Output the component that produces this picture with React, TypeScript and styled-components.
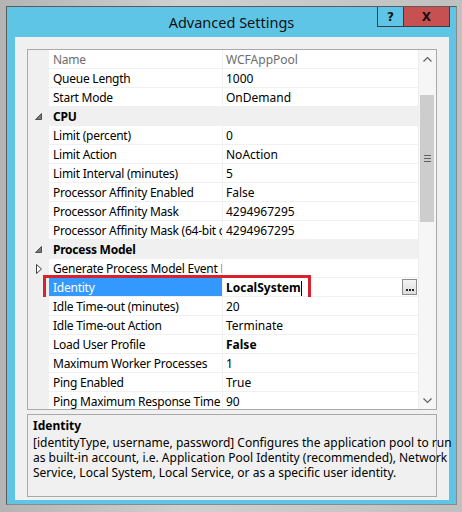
import React from 'react';
import styled, { createGlobalStyle } from 'styled-components';

const GlobalStyle = createGlobalStyle`
  html, body {
    margin: 0;
    padding: 0;
    background: #c4c4c4;
  }
  body {
    font-family: "Noto Sans", "Open Sans", sans-serif;
    font-size: 12px;
    color: #000;
  }
`;

const Screen = styled.div`
  width: 462px;
  height: 512px;
  box-sizing: border-box;
  padding: 6px 5px 7px 6px;
  display: flex;
  background: linear-gradient(90deg, #b4b4b4, #d0d0d0 40%, #c0c0c0);
`;

const Window = styled.div`
  flex: 1;
  min-width: 0;
  display: flex;
  flex-direction: column;
  background: #5fc5e7;
  border: 1px solid #5b5b5b;
  border-right-color: #8a8a8a;
  border-bottom-color: #8a8a8a;
`;

const TitleBar = styled.div`
  height: 30px;
  display: flex;
  align-items: flex-start;
`;

// left margin equals the caption buttons' width so the title stays centred
const Title = styled.div`
  flex: 1;
  margin-left: 79px;
  text-align: center;
  font-size: 14.5px;
  line-height: 30px;
  color: #111;
`;

const Controls = styled.div`
  display: flex;
  margin-right: 6px;
`;

const CaptionButton = styled.div<{ $close?: boolean; $w: number }>`
  width: ${(p) => p.$w}px;
  height: 20px;
  box-sizing: border-box;
  border: 1px solid #3c3c3c;
  border-top: none;
  border-left-width: ${(p) => (p.$close ? 0 : 1)}px;
  background: ${(p) => (p.$close ? '#c75050' : 'transparent')};
  display: flex;
  align-items: center;
  justify-content: center;
  font-family: "DejaVu Sans", sans-serif;
  font-weight: bold;
  font-size: 12px;
  color: #111;
`;

const Panel = styled.div`
  flex: 1;
  margin: 0 7px 4px 8px;
  background: #f0f0f0;
  padding: 12px 12px 3px;
  display: flex;
  flex-direction: column;
  gap: 4px;
`;

const Grid = styled.div`
  height: 361px;
  box-sizing: border-box;
  border: 1px solid #a9a9a9;
  background: #fff;
  display: flex;
`;

const Rows = styled.div`
  flex: 1;
  overflow: hidden;
`;

const Row = styled.div<{ $category?: boolean }>`
  position: relative;
  height: 19px;
  display: grid;
  grid-template-columns: 21px 174px 1fr;
  background: ${(p) => (p.$category ? '#f0f0f0' : '#fff')};
  font-weight: ${(p) => (p.$category ? 'bold' : 'normal')};
`;

const Gutter = styled.div`
  background: #f0f0f0;
  display: flex;
  align-items: center;
  justify-content: center;
`;

const NameCell = styled.div<{ $selected?: boolean; $muted?: boolean; $category?: boolean }>`
  box-sizing: border-box;
  padding: 2px 0 0 4px;
  line-height: 16px;
  white-space: nowrap;
  overflow: hidden;
  letter-spacing: -0.25px;
  border-bottom: 1px solid ${(p) => (p.$category ? 'transparent' : '#f0f0f0')};
  border-right: 1px solid ${(p) => (p.$category ? 'transparent' : '#f0f0f0')};
  background: ${(p) => (p.$selected ? '#3399ff' : 'transparent')};
  color: ${(p) => (p.$selected ? '#fff' : p.$muted ? '#6d6d6d' : 'inherit')};
`;

const ValueCell = styled.div<{ $bold?: boolean; $muted?: boolean; $category?: boolean }>`
  box-sizing: border-box;
  padding: 2px 0 0 3px;
  line-height: 16px;
  white-space: nowrap;
  overflow: hidden;
  display: flex;
  align-items: center;
  border-bottom: 1px solid ${(p) => (p.$category ? 'transparent' : '#f0f0f0')};
  font-weight: ${(p) => (p.$bold ? 'bold' : 'normal')};
  color: ${(p) => (p.$muted ? '#6d6d6d' : 'inherit')};
`;

const Caret = styled.span`
  width: 1px;
  height: 15px;
  background: #000;
`;

const EllipsisButton = styled.div`
  margin: -2px 1px 0 auto;
  width: 15px;
  height: 16px;
  box-sizing: border-box;
  border: 1px solid #8c8c8c;
  background: linear-gradient(#f4f4f4, #dddddd);
  display: flex;
  align-items: flex-end;
  justify-content: center;
  padding-bottom: 3px;
  gap: 1px;
`;

const Dot = styled.span`
  width: 2px;
  height: 2px;
  background: #222;
`;

const Highlight = styled.div`
  position: absolute;
  top: -3px;
  left: 15px;
  width: 268px;
  height: 26px;
  box-sizing: border-box;
  border: 3px solid #d9222d;
  pointer-events: none;
`;

const ScrollBar = styled.div`
  width: 17px;
  display: flex;
  flex-direction: column;
  background: #f6f6f6;
  border-left: 1px solid #ededed;
`;

const ArrowBox = styled.div`
  height: 17px;
  display: flex;
  align-items: center;
  justify-content: center;
`;

const Track = styled.div`
  flex: 1;
  padding-top: 28px;
`;

const Thumb = styled.div`
  margin: 0 2px 0 1px;
  height: 127px;
  background: #cdcdcd;
  display: flex;
  flex-direction: column;
  align-items: center;
  justify-content: center;
  gap: 2px;
`;

const GripLine = styled.span`
  width: 7px;
  height: 1px;
  background: #5f5f5f;
`;

const Description = styled.div`
  flex: 1;
  border: 1px solid #a9a9a9;
  padding: 3px 5px;
  line-height: 15px;
`;

const DescTitle = styled.div`
  font-weight: bold;
  line-height: 16px;
  margin-bottom: 1px;
`;

const DescLine = styled.div`
  white-space: nowrap;
`;

const Expanded = () => (
  <svg width="7" height="7" viewBox="0 0 7 7">
    <polygon points="6.5,0.5 6.5,6.5 0.5,6.5" fill="#7a7a7a" stroke="#505050" strokeWidth="1" />
  </svg>
);

const Collapsed = () => (
  <svg width="6" height="10" viewBox="0 0 6 10">
    <polygon points="0.5,0.5 5.5,5 0.5,9.5" fill="#fff" stroke="#404040" strokeWidth="1" />
  </svg>
);

const Chevron = ({ down }: { down?: boolean }) => (
  <svg width="9" height="6" viewBox="0 0 9 6">
    <polyline
      points={down ? '0.5,0.5 4.5,4.5 8.5,0.5' : '0.5,5.5 4.5,1.5 8.5,5.5'}
      fill="none"
      stroke="#606060"
      strokeWidth="1.2"
    />
  </svg>
);

type Item =
  | { kind: 'category'; name: string }
  | {
      kind: 'prop';
      name: string;
      value: string;
      bold?: boolean;
      muted?: boolean;
      collapsed?: boolean;
      selected?: boolean;
    };

const items: Item[] = [
  { kind: 'prop', name: 'Name', value: 'WCFAppPool', muted: true },
  { kind: 'prop', name: 'Queue Length', value: '1000' },
  { kind: 'prop', name: 'Start Mode', value: 'OnDemand' },
  { kind: 'category', name: 'CPU' },
  { kind: 'prop', name: 'Limit (percent)', value: '0' },
  { kind: 'prop', name: 'Limit Action', value: 'NoAction' },
  { kind: 'prop', name: 'Limit Interval (minutes)', value: '5' },
  { kind: 'prop', name: 'Processor Affinity Enabled', value: 'False' },
  { kind: 'prop', name: 'Processor Affinity Mask', value: '4294967295' },
  { kind: 'prop', name: 'Processor Affinity Mask (64-bit option)', value: '4294967295' },
  { kind: 'category', name: 'Process Model' },
  { kind: 'prop', name: 'Generate Process Model Event Log Entry', value: '', collapsed: true },
  { kind: 'prop', name: 'Identity', value: 'LocalSystem', bold: true, selected: true },
  { kind: 'prop', name: 'Idle Time-out (minutes)', value: '20' },
  { kind: 'prop', name: 'Idle Time-out Action', value: 'Terminate' },
  { kind: 'prop', name: 'Load User Profile', value: 'False', bold: true },
  { kind: 'prop', name: 'Maximum Worker Processes', value: '1' },
  { kind: 'prop', name: 'Ping Enabled', value: 'True' },
  { kind: 'prop', name: 'Ping Maximum Response Time (seconds)', value: '90' },
];

const PropertyRow = ({ item }: { item: Item }) => {
  if (item.kind === 'category') {
    return (
      <Row $category>
        <Gutter>
          <Expanded />
        </Gutter>
        <NameCell $category>{item.name}</NameCell>
        <ValueCell $category />
      </Row>
    );
  }
  return (
    <Row>
      <Gutter>{item.collapsed && <Collapsed />}</Gutter>
      <NameCell $selected={item.selected} $muted={item.muted}>
        {item.name}
      </NameCell>
      <ValueCell $bold={item.bold} $muted={item.muted}>
        {item.value}
        {item.selected && <Caret />}
        {item.selected && (
          <EllipsisButton>
            <Dot />
            <Dot />
            <Dot />
          </EllipsisButton>
        )}
      </ValueCell>
      {item.selected && <Highlight />}
    </Row>
  );
};

const App = () => (
  <>
    <GlobalStyle />
    <Screen>
      <Window>
        <TitleBar>
          <Title>Advanced Settings</Title>
          <Controls>
            <CaptionButton $w={27}>?</CaptionButton>
            <CaptionButton $w={46} $close>
              X
            </CaptionButton>
          </Controls>
        </TitleBar>
        <Panel>
          <Grid>
            <Rows>
              {items.map((item) => (
                <PropertyRow key={item.name} item={item} />
              ))}
            </Rows>
            <ScrollBar>
              <ArrowBox>
                <Chevron />
              </ArrowBox>
              <Track>
                <Thumb>
                  <GripLine />
                  <GripLine />
                  <GripLine />
                </Thumb>
              </Track>
              <ArrowBox>
                <Chevron down />
              </ArrowBox>
            </ScrollBar>
          </Grid>
          <Description>
            <DescTitle>Identity</DescTitle>
            <DescLine>[identityType, username, password] Configures the application pool to run</DescLine>
            <DescLine>as built-in account, i.e. Application Pool Identity (recommended), Network</DescLine>
            <DescLine>Service, Local System, Local Service, or as a specific user identity.</DescLine>
          </Description>
        </Panel>
      </Window>
    </Screen>
  </>
);

export default App;
